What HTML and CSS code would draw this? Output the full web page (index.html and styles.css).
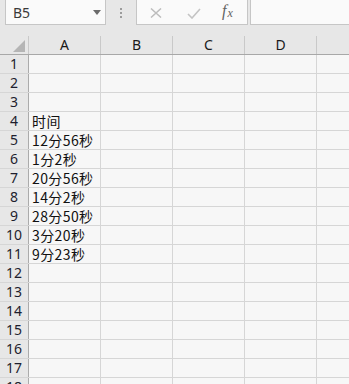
FILE: index.html
```html
<!DOCTYPE html>
<html lang="zh-CN">
<head>
    <meta charset="UTF-8">
    <title>Sheet1</title>
    <link rel="stylesheet" href="styles.css">
</head>
<body>
    <div class="toolbar">
        <div class="name-box">
            <span class="name-text">B5</span>
            <svg class="drop" width="8" height="5" viewBox="0 0 8 5"><path d="M0 0h8L4 5z" fill="#6b6b6b"/></svg>
        </div>
        <div class="grip"><i></i><i></i><i></i></div>
        <div class="fx-buttons">
            <svg class="btn-x" width="12" height="10" viewBox="0 0 12 10"><path d="M1 0.5L11 9.5M11 0.5L1 9.5" stroke="#bdbdbd" stroke-width="1.5"/></svg>
            <svg class="btn-ok" width="14" height="11" viewBox="0 0 14 11"><path d="M1 6L5 10L13 1" stroke="#c4c4c4" stroke-width="1.6" fill="none"/></svg>
            <span class="fx">f<sub>x</sub></span>
        </div>
        <div class="formula"></div>
    </div>

    <div class="sheet">
        <div class="row head">
            <div class="rh corner"><svg width="12" height="12" viewBox="0 0 12 12"><path d="M12 0V12H0z" fill="#b5b5b5"/></svg></div>
            <div class="c ch">A</div>
            <div class="c ch">B</div>
            <div class="c ch">C</div>
            <div class="c ch">D</div>
            <div class="c ch last"></div>
        </div>
        <div class="row"><div class="rh">1</div><div class="c"></div><div class="c"></div><div class="c"></div><div class="c"></div><div class="c last"></div></div>
        <div class="row"><div class="rh">2</div><div class="c"></div><div class="c"></div><div class="c"></div><div class="c"></div><div class="c last"></div></div>
        <div class="row"><div class="rh">3</div><div class="c"></div><div class="c"></div><div class="c"></div><div class="c"></div><div class="c last"></div></div>
        <div class="row"><div class="rh">4</div><div class="c">时间</div><div class="c"></div><div class="c"></div><div class="c"></div><div class="c last"></div></div>
        <div class="row"><div class="rh">5</div><div class="c">12分56秒</div><div class="c"></div><div class="c"></div><div class="c"></div><div class="c last"></div></div>
        <div class="row"><div class="rh">6</div><div class="c">1分2秒</div><div class="c"></div><div class="c"></div><div class="c"></div><div class="c last"></div></div>
        <div class="row"><div class="rh">7</div><div class="c">20分56秒</div><div class="c"></div><div class="c"></div><div class="c"></div><div class="c last"></div></div>
        <div class="row"><div class="rh">8</div><div class="c">14分2秒</div><div class="c"></div><div class="c"></div><div class="c"></div><div class="c last"></div></div>
        <div class="row"><div class="rh">9</div><div class="c">28分50秒</div><div class="c"></div><div class="c"></div><div class="c"></div><div class="c last"></div></div>
        <div class="row"><div class="rh">10</div><div class="c">3分20秒</div><div class="c"></div><div class="c"></div><div class="c"></div><div class="c last"></div></div>
        <div class="row"><div class="rh">11</div><div class="c">9分23秒</div><div class="c"></div><div class="c"></div><div class="c"></div><div class="c last"></div></div>
        <div class="row"><div class="rh">12</div><div class="c"></div><div class="c"></div><div class="c"></div><div class="c"></div><div class="c last"></div></div>
        <div class="row"><div class="rh">13</div><div class="c"></div><div class="c"></div><div class="c"></div><div class="c"></div><div class="c last"></div></div>
        <div class="row"><div class="rh">14</div><div class="c"></div><div class="c"></div><div class="c"></div><div class="c"></div><div class="c last"></div></div>
        <div class="row"><div class="rh">15</div><div class="c"></div><div class="c"></div><div class="c"></div><div class="c"></div><div class="c last"></div></div>
        <div class="row"><div class="rh">16</div><div class="c"></div><div class="c"></div><div class="c"></div><div class="c"></div><div class="c last"></div></div>
        <div class="row"><div class="rh">17</div><div class="c"></div><div class="c"></div><div class="c"></div><div class="c"></div><div class="c last"></div></div>
        <div class="row"><div class="rh">18</div><div class="c"></div><div class="c"></div><div class="c"></div><div class="c"></div><div class="c last"></div></div>
    </div>
</body>
</html>
```

FILE: styles.css
```css
html, body {
    margin: 0;
    padding: 0;
    background: #e7e7e7;
    overflow: hidden;
}

body {
    width: 349px;
    height: 384px;
    font-family: "Noto Sans", "Noto Sans CJK SC", sans-serif;
    color: #222;
}

/* formula bar */
.toolbar {
    display: flex;
    height: 25px;
    padding-left: 5px;
    margin-bottom: 11px;
}

.name-box {
    width: 101px;
    height: 25px;
    box-sizing: border-box;
    border: 1px solid #c6c6c6;
    border-top: none;
    background: #fafafa;
    display: flex;
    align-items: center;
    justify-content: space-between;
    padding: 0 4px 0 7px;
}

.name-text {
    font-family: "Noto Sans", sans-serif;
    font-size: 14px;
    color: #3a3a3a;
    margin-top: 1px;
}

.drop {
    margin-top: 1px;
}

.grip {
    width: 30px;
    display: flex;
    flex-direction: column;
    align-items: center;
    gap: 2px;
    padding-top: 8px;
}

.grip i {
    display: block;
    width: 2px;
    height: 2px;
    background: #9c9c9c;
}

.fx-buttons {
    width: 112px;
    height: 25px;
    box-sizing: border-box;
    border: 1px solid #c6c6c6;
    border-top: none;
    background: #fafafa;
    display: flex;
    align-items: center;
    padding-left: 13px;
}

.btn-x {
    margin-top: 1px;
}

.btn-ok {
    margin-left: 25px;
    margin-top: 2px;
}

.fx {
    margin-left: 21px;
    font-family: "Liberation Serif", serif;
    font-style: italic;
    font-size: 16px;
    color: #626262;
    line-height: 1;
    margin-top: -2px;
}

.fx sub {
    font-size: 12px;
    vertical-align: -1px;
    margin-left: 1px;
}

.formula {
    flex: 1;
    margin-left: 2px;
    height: 25px;
    box-sizing: border-box;
    border: 1px solid #c6c6c6;
    border-top: none;
    border-right: none;
    background: #fafafa;
}

/* grid */
.sheet {
    background: #f7f7f7;
}

.row {
    display: flex;
    height: 19px;
    box-sizing: border-box;
    border-bottom: 1px solid #d6d6d6;
}

.rh {
    width: 29px;
    flex: none;
    box-sizing: border-box;
    border-right: 1px solid #ababab;
    background: #e7e7e7;
    font-size: 14px;
    line-height: 18px;
    text-align: center;
    color: #1e1e2e;
}

.c {
    width: 72px;
    flex: none;
    box-sizing: border-box;
    border-right: 1px solid #d6d6d6;
    padding-left: 3px;
    font-family: "Noto Sans CJK SC", sans-serif;
    font-size: 14px;
    letter-spacing: 0.4px;
    line-height: 18px;
    color: #111;
    white-space: nowrap;
}

.c.last {
    flex: 1;
    border-right: none;
}

.row.head {
    border-bottom: 1px solid #a8a8a8;
    background: #e7e7e7;
}

.head .rh {
    border-right-color: #c9c9c9;
}

.corner {
    display: flex;
    align-items: flex-end;
    justify-content: flex-end;
    padding: 0 3px 2px 0;
}

.ch {
    background: #e7e7e7;
    border-right-color: #c9c9c9;
    text-align: center;
    padding-left: 0;
    letter-spacing: 0;
    font-family: "Noto Sans", sans-serif;
    font-size: 14px;
    color: #1a1a1a;
}
```
